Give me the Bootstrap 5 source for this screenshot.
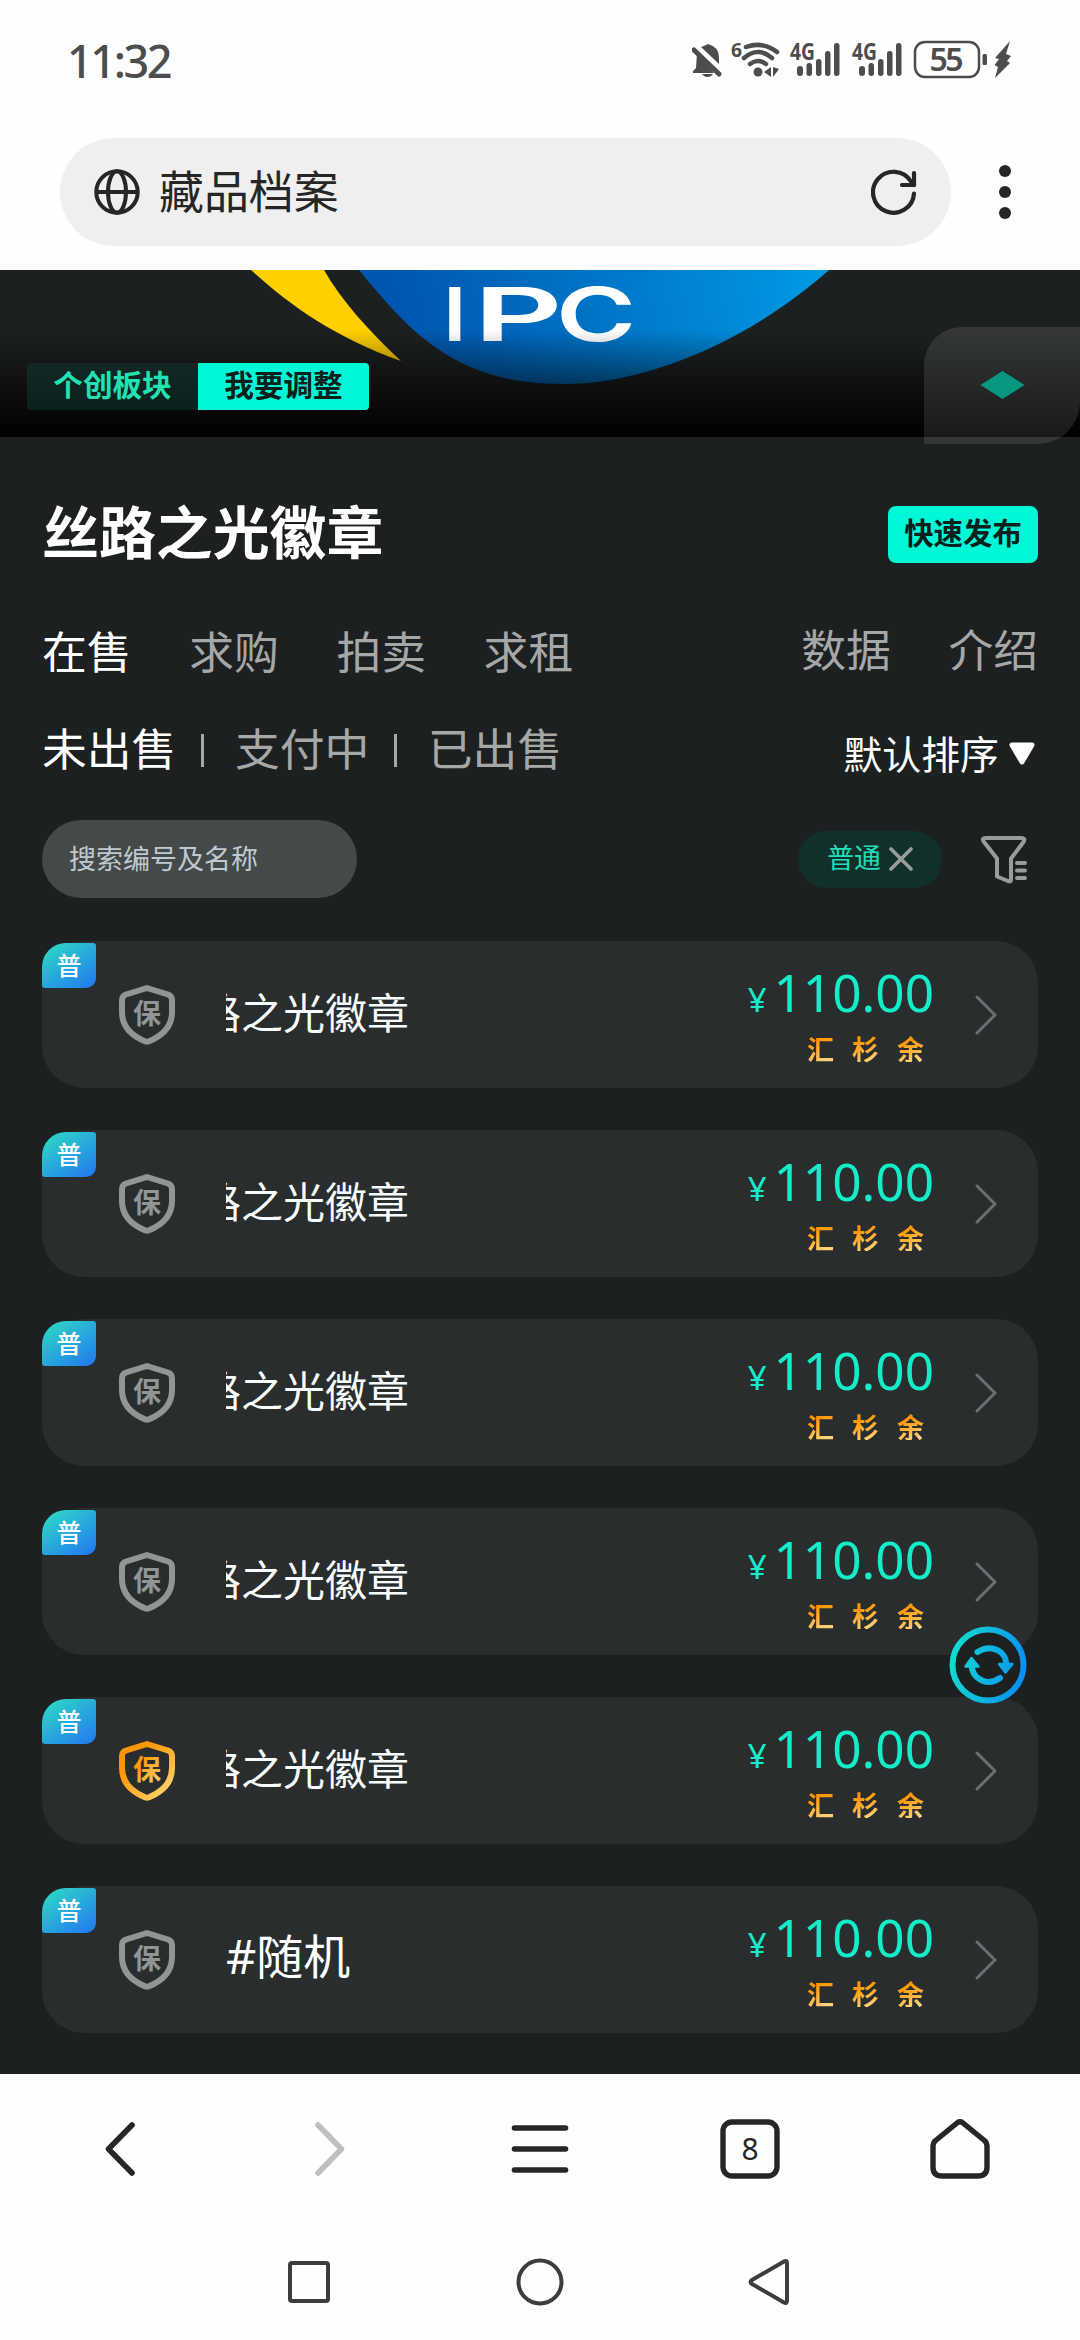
<!DOCTYPE html>
<html lang="zh-CN">
<head>
<meta charset="utf-8">
<meta name="viewport" content="width=device-width, initial-scale=1">
<title>藏品档案</title>
<link href="https://cdn.jsdelivr.net/npm/bootstrap@5.3.0/dist/css/bootstrap.min.css" rel="stylesheet">
<style>
body{width:1080px;height:2340px;overflow:hidden;background:#fefefe;font-family:"Noto Sans","Noto Sans CJK SC",sans-serif;line-height:1}
svg{display:block;flex:none}
.cjk{font-family:"Noto Sans CJK SC",sans-serif}
.status-row{height:123px;padding:0 68px 3px 67px;color:#4d4d4d}
.clock{font-size:45px;font-weight:500;letter-spacing:-2.4px}
.address-row{padding:15px 0 24px 60px}
.address-pill{width:891px;height:108px;background:#efefef;padding:0 34px 0 34px;color:#262626}
.address-text{font-size:44.9px;margin-left:19px;padding-bottom:4px}
.market{height:1804px;background:#1d2021;color:#fff}
.hero-band{height:167px}
.hero-band>svg{position:absolute;left:0;top:0}
.tag-pair{position:absolute;left:27px;top:93px;height:47px;font-size:29.6px;font-weight:700}
.tag-pair span{width:171px;padding-bottom:6px}
.tag-own{background:linear-gradient(#132824,#0b211e);color:#22e2b4;border-radius:4px 0 0 4px}
.tag-adjust{background:#00f8d6;color:#06201c;border-radius:0 4px 4px 0}
.float-tab{position:absolute;left:924px;top:57px;width:156px;height:117px;border-radius:38px 0 42px 0;background:rgba(255,255,255,.1)}
.content{padding:0 42px}
.title-row{height:57px;margin-top:69px}
.title-text{font-size:56.9px;font-weight:700;padding-bottom:11px}
.btn-publish{width:150px;height:57px;padding:0 0 5px;background:#00f8d6;color:#06201c;border:0;border-radius:8px;font-size:29.4px;font-weight:700;line-height:1}
.tab-row{height:60px;margin-top:59px;font-size:44.8px;color:#a6a7a7}
.tab-row .group{gap:57.6px;padding-bottom:3px}
.tab-row .group.end{padding-bottom:7px}
.state-row{height:60px;margin-top:37px;font-size:44.8px;color:#a6a7a7}
.state-row b{font-weight:400;padding-bottom:4px}
.split{width:3px;height:33px;background:#a6a7a7;margin:4px 31px 0 24.500px}
.sorter{font-size:38.9px;color:#fff;gap:10px;padding:9px 3px 0 0}
.sorter span{padding-bottom:3px}
.search-row{height:78px;margin-top:41px}
.search-box{width:315px;height:78px;background:#434a49;border:0;border-radius:39px;padding:0 27px 4px;font-size:27px;color:#c0c9cf;box-shadow:none!important}
.search-box::placeholder{color:#c0c9cf;opacity:1}
.filters{padding-right:10px;gap:38px}
.chip{width:144px;height:57px;background:#12302b;border-radius:29px;color:#20dfb9;font-size:26.8px;gap:8px}
.chip span{padding-bottom:3px}
.list-area{margin-top:43px;gap:42px}
.offer{height:147px;border-radius:42px;background:#292d2e;border:0}
.grade{position:absolute;left:0;top:2px;width:54px;height:45px;border-radius:24px 3px 10px 3px;background:linear-gradient(145deg,#2edfc2,#27a5dd 55%,#2276f0);color:#fff;font-size:25px;font-weight:500;padding-bottom:3px}
.shield{margin-left:77px}
.name-clip{width:280px;height:64px;margin-left:51px;padding-bottom:8px;overflow:hidden;font-size:42px;white-space:nowrap;color:#f6fcfc}
.name-clip.scrolled span{margin-left:-27px}
.name-clip.still{font-family:"Noto Sans","Noto Sans CJK SC",sans-serif;font-size:47px;color:#fff;padding-bottom:6px}
.price-col{width:200px;margin-left:228px}
.price{color:#14edca;font-family:"Noto Sans",sans-serif;font-size:51.3px;line-height:52px;height:52px;margin-top:25px;white-space:nowrap}
.price small{font-size:33px;line-height:1;margin-right:7px}
.pays{gap:18px;font-size:27px;font-weight:700;margin:17px 10px 0 0}
.pays span{background:linear-gradient(160deg,#ff9500 25%,#ffd27a 90%);-webkit-background-clip:text;background-clip:text;color:transparent}
.arrow{margin-left:41px}
.reload-fab{position:absolute;left:949px;top:1356px}
.browser-bar{height:150px;padding:0 15px}
.system-bar{height:116px;padding:0 194px}
</style>
</head>
<body>
<svg width="0" height="0" class="position-absolute">
  <defs>
    <linearGradient id="gold" x1="0" y1="0" x2="1" y2="1"><stop offset=".25" stop-color="#ff9500"/><stop offset="1" stop-color="#ffd878"/></linearGradient>
    <linearGradient id="aqua" gradientUnits="userSpaceOnUse" x1="0" y1="30" x2="78" y2="46"><stop offset="0" stop-color="#11dfcf"/><stop offset="1" stop-color="#0a8cf2"/></linearGradient>
    <symbol id="guard" viewBox="0 0 56 60"><path d="M28 3 L49 9.5 Q53 11 53 15 V27 C53 42 43 51 29.500 56.500 Q28 57 26.500 56.500 C13 51 3 42 3 27 V15 Q3 11 7 9.500 Z" fill="none" stroke-width="6" stroke-linejoin="round"/><text x="28" y="38.500" text-anchor="middle" stroke="none" font-family="Noto Sans CJK SC" font-weight="700" font-size="28">保</text></symbol>
    <symbol id="next" viewBox="0 0 22 40"><path d="M2 2 L20 20 L2 38" fill="none" stroke="#6c6f70" stroke-width="3" stroke-linecap="round" stroke-linejoin="round"/></symbol>
  </defs>
</svg>

<header>
  <div class="status-row d-flex align-items-center justify-content-between">
    <span class="clock">11:32</span>
    <svg width="320" height="60" viewBox="693 30 320 60" fill="#4d4d4d">
      <path d="M709 44 Q720 47 720 57 V64 L702 47 Q705 46 709 44Z"/>
      <path d="M698 53 L715 73 H694 V71 L697 68 Z"/>
      <path d="M695 50 L720 74" stroke="#4d4d4d" stroke-width="5" stroke-linecap="round"/>
      <path d="M703 74 H714 Q712 77 708.500 77 Q705 77 703 74Z"/>
      <text x="732" y="57" font-size="20" font-weight="700" textLength="11" lengthAdjust="spacingAndGlyphs" font-family="Noto Sans">6</text>
      <g fill="none" stroke="#4d4d4d" stroke-width="4.500" stroke-linecap="round">
        <path d="M747 47 Q764 41 778 52"/><path d="M745 58 Q759 46 773 58"/><path d="M751 64 Q759 58 767 64"/>
      </g>
      <circle cx="759" cy="72" r="4.500"/><path d="M765 72 L772 67 V77Z M780 69 L774 77 V67Z"/>
      <g id="cell">
        <text x="791" y="60" font-size="22.500" font-weight="700" textLength="25" lengthAdjust="spacingAndGlyphs" font-family="Noto Sans">4G</text>
        <rect x="798" y="66" width="6" height="10" rx="3"/><rect x="807.500" y="63" width="5.500" height="13" rx="2.700"/><rect x="817" y="59" width="5.500" height="17" rx="2.700"/><rect x="826" y="51" width="5.500" height="25" rx="2.700"/><rect x="835" y="43" width="5.500" height="33" rx="2.700"/>
      </g>
      <use href="#cell" x="62"/>
      <rect x="916" y="42" width="64" height="35" rx="10" fill="none" stroke="#4d4d4d" stroke-width="2.500"/>
      <text x="947.500" y="71" text-anchor="middle" font-size="32" font-weight="600" textLength="34" font-family="Noto Sans">55</text>
      <rect x="983.500" y="54" width="4.500" height="11" rx="1.500"/>
      <path d="M1011 41 L996 58 L1000 59 L995.500 65 L999 67 L996 78 L1011 63 L1008 61 L1012 56 L1007 54Z"/>
    </svg>
  </div>
  <div class="address-row d-flex align-items-center">
    <div class="address-pill rounded-pill d-flex align-items-center justify-content-between">
      <div class="d-flex align-items-center">
        <svg width="46" height="46" viewBox="0 0 46 46" fill="none" stroke="#262626" stroke-width="4"><circle cx="23" cy="23" r="20.700"/><ellipse cx="23" cy="23" rx="9" ry="20.700"/><path d="M2 23H44"/></svg>
        <span class="address-text cjk">藏品档案</span>
      </div>
      <svg width="46" height="48" viewBox="0 0 46 48" fill="none" stroke="#262626" stroke-width="4.200" stroke-linecap="round" stroke-linejoin="round"><path d="M43 25.500 A20.500 20.500 0 1 1 40 13.500 L43 17"/><path d="M43 5 V17 H31"/></svg>
    </div>
    <svg width="12" height="56" viewBox="0 0 12 56" fill="#262626" style="margin-left:48px"><circle cx="6" cy="7" r="6"/><circle cx="6" cy="28" r="6"/><circle cx="6" cy="49" r="6"/></svg>
  </div>
</header>

<main class="market position-relative">
  <section class="hero-band position-relative">
    <svg width="1080" height="167" viewBox="0 270 1080 167">
      <defs>
        <linearGradient id="sea" gradientUnits="userSpaceOnUse" x1="400" y1="290" x2="800" y2="200"><stop offset="0" stop-color="#0057b0"/><stop offset=".45" stop-color="#0074c6"/><stop offset="1" stop-color="#0099e4"/></linearGradient>
        <linearGradient id="dusk" x1="0" y1="0" x2="0" y2="1"><stop offset="0" stop-color="#000" stop-opacity="0"/><stop offset=".5" stop-color="#000" stop-opacity=".5"/><stop offset="1" stop-color="#000"/></linearGradient>
      </defs>
      <path d="M251 270 C290 305 332 336 401 361 C368 330 341 300 324 270Z" fill="#ffd000"/>
      <path d="M359 270 C410 332 455 384 562 384 C655 384 757 334 829 270Z" fill="url(#sea)"/>
      <g fill="#fff" font-family="Inter" font-weight="600" font-size="74">
        <text transform="translate(443 341) scale(1.150 1)">I</text>
        <text transform="translate(473.500 341) scale(1.870 1)">P</text>
        <text transform="translate(556 341) scale(1.470 1)">C</text>
      </g>
      <rect y="330" width="1080" height="107" fill="url(#dusk)"/>
    </svg>
    <div class="tag-pair cjk d-flex">
      <span class="tag-own d-flex align-items-center justify-content-center">个创板块</span>
      <span class="tag-adjust d-flex align-items-center justify-content-center">我要调整</span>
    </div>
    <div class="float-tab"><svg width="156" height="117"><path d="M56.500 58 L78.500 44 L100.500 58 L78.500 72Z" fill="#07997f"/></svg></div>
  </section>

  <div class="content cjk">
    <div class="title-row d-flex align-items-center justify-content-between">
      <span class="title-text">丝路之光徽章</span>
      <button class="btn btn-publish">快速发布</button>
    </div>
    <nav class="tab-row d-flex align-items-center justify-content-between">
      <div class="group d-flex"><span class="text-white">在售</span><span>求购</span><span>拍卖</span><span>求租</span></div>
      <div class="group end d-flex"><span>数据</span><span>介绍</span></div>
    </nav>
    <div class="state-row d-flex align-items-center justify-content-between">
      <div class="d-flex align-items-center"><b class="text-white">未出售</b><i class="split"></i><b>支付中</b><i class="split"></i><b>已出售</b></div>
      <div class="sorter d-flex align-items-center"><span>默认排序</span><svg width="26" height="23" viewBox="0 0 26 23"><path d="M3 3H23L13 20Z" fill="#fff" stroke="#fff" stroke-width="5" stroke-linejoin="round"/></svg></div>
    </div>
    <div class="search-row d-flex align-items-center justify-content-between">
      <input class="search-box form-control cjk" type="text" placeholder="搜索编号及名称">
      <div class="filters d-flex align-items-center">
        <div class="chip d-flex align-items-center justify-content-center"><span>普通</span><svg width="24" height="24" viewBox="0 0 24 24" fill="none" stroke="#9a9c9c" stroke-width="3.600" stroke-linecap="round"><path d="M2 2 22 22M22 2 2 22"/></svg></div>
        <svg width="48" height="50" viewBox="0 0 48 50" fill="none" stroke="#9a9b9b" stroke-width="4" stroke-linecap="round" stroke-linejoin="round"><path d="M6 4H41Q46 4 43.500 8L31 24.500V46Q31 48 28 47L17 42.500V24.500L4 8Q1 4 6 4Z"/><path d="M37 29H45M37 36.500H45M37 44H45"/></svg>
      </div>
    </div>

    <div class="list-area d-flex flex-column">
      <article class="offer position-relative d-flex align-items-center">
        <span class="grade d-flex align-items-center justify-content-center">普</span>
        <svg class="shield" width="56" height="60" stroke="#929595" fill="#929595"><use href="#guard"/></svg>
        <div class="name-clip scrolled d-flex align-items-center"><span>路之光徽章</span></div>
        <div class="price-col align-self-start d-flex flex-column align-items-end"><div class="price"><small>¥</small>110.00</div><div class="pays d-flex"><span>汇</span><span>杉</span><span>余</span></div></div>
        <svg class="arrow" width="22" height="40"><use href="#next"/></svg>
      </article>
      <article class="offer position-relative d-flex align-items-center">
        <span class="grade d-flex align-items-center justify-content-center">普</span>
        <svg class="shield" width="56" height="60" stroke="#929595" fill="#929595"><use href="#guard"/></svg>
        <div class="name-clip scrolled d-flex align-items-center"><span>路之光徽章</span></div>
        <div class="price-col align-self-start d-flex flex-column align-items-end"><div class="price"><small>¥</small>110.00</div><div class="pays d-flex"><span>汇</span><span>杉</span><span>余</span></div></div>
        <svg class="arrow" width="22" height="40"><use href="#next"/></svg>
      </article>
      <article class="offer position-relative d-flex align-items-center">
        <span class="grade d-flex align-items-center justify-content-center">普</span>
        <svg class="shield" width="56" height="60" stroke="#929595" fill="#929595"><use href="#guard"/></svg>
        <div class="name-clip scrolled d-flex align-items-center"><span>路之光徽章</span></div>
        <div class="price-col align-self-start d-flex flex-column align-items-end"><div class="price"><small>¥</small>110.00</div><div class="pays d-flex"><span>汇</span><span>杉</span><span>余</span></div></div>
        <svg class="arrow" width="22" height="40"><use href="#next"/></svg>
      </article>
      <article class="offer position-relative d-flex align-items-center">
        <span class="grade d-flex align-items-center justify-content-center">普</span>
        <svg class="shield" width="56" height="60" stroke="#929595" fill="#929595"><use href="#guard"/></svg>
        <div class="name-clip scrolled d-flex align-items-center"><span>路之光徽章</span></div>
        <div class="price-col align-self-start d-flex flex-column align-items-end"><div class="price"><small>¥</small>110.00</div><div class="pays d-flex"><span>汇</span><span>杉</span><span>余</span></div></div>
        <svg class="arrow" width="22" height="40"><use href="#next"/></svg>
      </article>
      <article class="offer position-relative d-flex align-items-center">
        <span class="grade d-flex align-items-center justify-content-center">普</span>
        <svg class="shield" width="56" height="60" stroke="url(#gold)" fill="url(#gold)"><use href="#guard"/></svg>
        <div class="name-clip scrolled d-flex align-items-center"><span>路之光徽章</span></div>
        <div class="price-col align-self-start d-flex flex-column align-items-end"><div class="price"><small>¥</small>110.00</div><div class="pays d-flex"><span>汇</span><span>杉</span><span>余</span></div></div>
        <svg class="arrow" width="22" height="40"><use href="#next"/></svg>
      </article>
      <article class="offer position-relative d-flex align-items-center">
        <span class="grade d-flex align-items-center justify-content-center">普</span>
        <svg class="shield" width="56" height="60" stroke="#929595" fill="#929595"><use href="#guard"/></svg>
        <div class="name-clip still d-flex align-items-center"><span>#随机</span></div>
        <div class="price-col align-self-start d-flex flex-column align-items-end"><div class="price"><small>¥</small>110.00</div><div class="pays d-flex"><span>汇</span><span>杉</span><span>余</span></div></div>
        <svg class="arrow" width="22" height="40"><use href="#next"/></svg>
      </article>
    </div>
  </div>

  <svg class="reload-fab" width="78" height="78" viewBox="0 0 78 78" fill="none" stroke="url(#aqua)">
    <circle cx="39" cy="39" r="35.500" fill="#1d2021" fill-opacity=".9" stroke-width="6"/>
    <path d="M28.500 26 C42 17.500 58 25 57 39" stroke-width="6" stroke-linecap="round"/>
    <path d="M51 52 C38 61 22.500 53 22.500 38" stroke-width="6" stroke-linecap="round"/>
    <path d="M50 38 H63.500 L56.500 46.500Z M16.500 40.500 H29.500 L22.500 32Z" fill="url(#aqua)" stroke-width="2.500" stroke-linejoin="round"/>
  </svg>
</main>

<footer>
  <nav class="browser-bar d-flex align-items-center">
    <div class="col d-flex justify-content-center"><svg width="30" height="54" viewBox="0 0 30 54" fill="none" stroke="#262626" stroke-width="5.600" stroke-linecap="round" stroke-linejoin="round"><path d="M27 3 3.500 27 27 51"/></svg></div>
    <div class="col d-flex justify-content-center"><svg width="30" height="54" viewBox="0 0 30 54" fill="none" stroke="#bfbfbf" stroke-width="5.600" stroke-linecap="round" stroke-linejoin="round"><path d="M3 3 26.500 27 3 51"/></svg></div>
    <div class="col d-flex justify-content-center"><svg width="58" height="48" viewBox="0 0 58 48" fill="none" stroke="#262626" stroke-width="5.600" stroke-linecap="round"><path d="M3.500 3H54.500M3.500 24H54.500M3.500 45H54.500"/></svg></div>
    <div class="col d-flex justify-content-center"><svg width="60" height="60" viewBox="0 0 60 60"><rect x="3" y="3" width="54" height="54" rx="9" fill="none" stroke="#262626" stroke-width="5.400"/><text x="30" y="41" text-anchor="middle" font-family="Noto Sans" font-size="30" fill="#262626">8</text></svg></div>
    <div class="col d-flex justify-content-center"><svg width="60" height="60" viewBox="0 0 60 60" fill="none" stroke="#262626" stroke-width="5.400" stroke-linejoin="round"><path d="M27 4Q30 1.500 33 4L55 22Q57 24 57 27V48Q57 57 48 57H12Q3 57 3 48V27Q3 24 5 22Z"/></svg></div>
  </nav>
  <nav class="system-bar d-flex align-items-center">
    <div class="col d-flex justify-content-center"><svg width="44" height="48" viewBox="0 0 44 48" fill="none" stroke="#3d3d3d" stroke-width="4"><rect x="3" y="5" width="38" height="38" rx="2"/></svg></div>
    <div class="col d-flex justify-content-center"><svg width="48" height="48" viewBox="0 0 48 48" fill="none" stroke="#3d3d3d" stroke-width="4"><circle cx="24" cy="24" r="21.500"/></svg></div>
    <div class="col d-flex justify-content-center"><svg width="46" height="48" viewBox="0 0 46 48" fill="none" stroke="#3d3d3d" stroke-width="4" stroke-linejoin="round"><path d="M36 3.500Q39 2 39 5V43Q39 46 36 44.500L4 26Q1 24 4 22Z"/></svg></div>
  </nav>
</footer>
<script src="https://cdn.jsdelivr.net/npm/bootstrap@5.3.0/dist/js/bootstrap.bundle.min.js"></script>
</body>
</html>
